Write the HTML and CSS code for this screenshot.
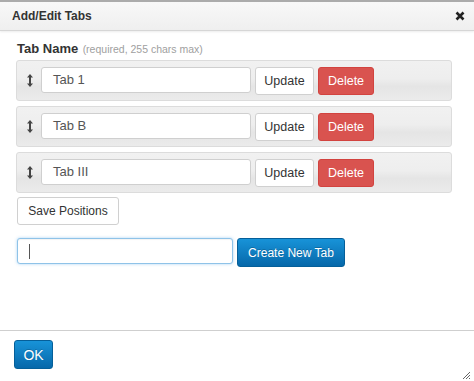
FILE: index.html
```html
<!DOCTYPE html>
<html>
<head>
<meta charset="utf-8">
<link rel="stylesheet" href="styles.css">
</head>
<body>
<div class="dialog">
  <div class="header">
    <span class="title">Add/Edit Tabs</span>
    <svg class="close" width="10" height="10" viewBox="0 0 10 10"><path d="M1.5 1.5 L8.5 8.5 M8.5 1.5 L1.5 8.5" stroke="#222" stroke-width="2.6" stroke-linecap="butt"/></svg>
  </div>
  <div class="content">
    <div class="label"><span class="label-main">Tab Name</span> <span class="label-note">(required, 255 chars max)</span></div>
    <div class="tab-row">
      <svg class="drag" width="6" height="15" viewBox="0 0 6 15"><path d="M3 1 L6 4.5 H4 V10.5 H6 L3 14 L0 10.5 H2 V4.5 H0 Z" fill="#444"/></svg>
      <div class="field">Tab 1</div>
      <button class="btn btn-update">Update</button>
      <button class="btn btn-delete">Delete</button>
    </div>
    <div class="tab-row">
      <svg class="drag" width="6" height="15" viewBox="0 0 6 15"><path d="M3 1 L6 4.5 H4 V10.5 H6 L3 14 L0 10.5 H2 V4.5 H0 Z" fill="#444"/></svg>
      <div class="field">Tab B</div>
      <button class="btn btn-update">Update</button>
      <button class="btn btn-delete">Delete</button>
    </div>
    <div class="tab-row">
      <svg class="drag" width="6" height="15" viewBox="0 0 6 15"><path d="M3 1 L6 4.5 H4 V10.5 H6 L3 14 L0 10.5 H2 V4.5 H0 Z" fill="#444"/></svg>
      <div class="field">Tab III</div>
      <button class="btn btn-update">Update</button>
      <button class="btn btn-delete">Delete</button>
    </div>
    <button class="btn btn-save">Save Positions</button>
    <div class="new-row">
      <div class="new-field"><span class="caret"></span></div>
      <button class="btn btn-primary btn-create">Create New Tab</button>
    </div>
  </div>
  <div class="footer">
    <button class="btn btn-primary btn-ok">OK</button>
    <svg class="grip" width="10" height="10" viewBox="0 0 10 10"><path d="M9 2 L2 9 M9 5 L5 9 M9 8 L8 9" stroke="#666" stroke-width="1"/></svg>
  </div>
</div>
</body>
</html>
```
FILE: styles.css
```css
html, body {
  margin: 0;
  padding: 0;
  background: #fff;
}
body {
  font-family: "Liberation Sans", Arial, sans-serif;
  color: #333;
}
.dialog {
  height: 381px;
  display: flex;
  flex-direction: column;
  position: relative;
}
.header {
  box-sizing: border-box;
  height: 31px;
  border-top: 2px solid #ababab;
  border-bottom: 1px solid #d6d6d6;
  background: linear-gradient(#f8f8f8, #efefef);
  box-shadow: 0 1px 2px rgba(0,0,0,0.08);
  display: flex;
  align-items: center;
  justify-content: space-between;
  padding: 0 9px 0 12px;
}
.title {
  font-size: 12px;
  font-weight: bold;
  color: #333;
}
.close {
  display: block;
}
.content {
  flex: 1;
  padding: 0 22px 0 16px;
}
.label {
  margin-top: 8px;
  line-height: 18px;
  height: 18px;
  margin-bottom: 3px;
  padding-left: 1px;
}
.label-main {
  font-size: 13px;
  font-weight: bold;
  color: #333;
}
.label-note {
  font-size: 10.5px;
  color: #a0a0a0;
}
.tab-row {
  box-sizing: border-box;
  height: 41px;
  margin-bottom: 5px;
  border: 1px solid #dcdcdc;
  border-radius: 3px;
  background: linear-gradient(#f1f1f1 0%, #eeeeee 45%, #e5e5e5 65%, #ebebeb 100%);
  display: flex;
  align-items: flex-start;
  padding: 6px 0 0 10px;
}
.drag {
  display: block;
  margin-top: 6px;
  margin-right: 8px;
}
.field {
  box-sizing: border-box;
  width: 210px;
  height: 26px;
  border: 1px solid #cfcfcf;
  border-radius: 3px;
  background: #fff;
  font-size: 13px;
  line-height: 24px;
  color: #555;
  padding-left: 11px;
}
.btn {
  box-sizing: border-box;
  font-family: "Liberation Sans", Arial, sans-serif;
  font-size: 12px;
  border-radius: 3px;
  padding: 0;
  margin: 0;
  cursor: pointer;
}
.btn-update {
  margin-left: 4px;
  width: 59px;
  height: 28px;
  background: #fff;
  border: 1px solid #d0d0d0;
  color: #333;
  font-size: 12.5px;
}
.btn-delete {
  margin-left: 4px;
  width: 56px;
  height: 28px;
  background: #d9534f;
  border: 1px solid #d2433f;
  color: #fff;
  font-size: 12.5px;
}
.btn-save {
  display: block;
  margin: -1px 0 0 1px;
  width: 102px;
  height: 28px;
  background: #fff;
  border: 1px solid #d0d0d0;
  color: #333;
  font-size: 12px;
}
.new-row {
  display: flex;
  align-items: flex-start;
  margin-top: 13px;
  padding-left: 1px;
}
.new-field {
  box-sizing: border-box;
  position: relative;
  width: 216px;
  height: 26px;
  border: 1px solid #8fc3e8;
  border-radius: 3px;
  background: #fff;
  box-shadow: 0 0 3px rgba(82,168,236,0.5), inset 0 1px 1px rgba(0,0,0,0.05);
}
.caret {
  position: absolute;
  left: 11px;
  top: 5px;
  width: 1px;
  height: 15px;
  background: #555;
}
.btn-primary {
  background: linear-gradient(#1893d8, #0668aa);
  border: 1px solid #055f99;
  color: #fff;
  text-shadow: 0 -1px 0 rgba(0,0,0,0.2);
}
.btn-create {
  margin-left: 4px;
  width: 108px;
  height: 29px;
  font-size: 12px;
}
.footer {
  box-sizing: border-box;
  height: 51px;
  border-top: 1px solid #cfcfcf;
  padding: 9px 0 0 14px;
  position: relative;
}
.btn-ok {
  display: block;
  width: 39px;
  height: 29px;
  font-size: 14px;
}
.grip {
  position: absolute;
  right: 3px;
  bottom: 1px;
}
```
